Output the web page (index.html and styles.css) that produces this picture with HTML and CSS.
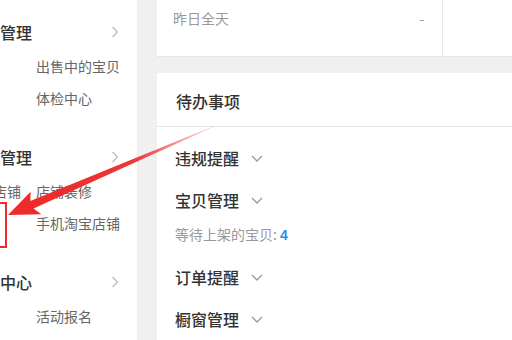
FILE: index.html
```html
<!DOCTYPE html>
<html lang="zh">
<head>
<meta charset="utf-8">
<link rel="stylesheet" href="styles.css">
</head>
<body>
<div class="page">
  <aside class="sidebar">
    <div class="group">
      <div class="group-title"><span>管理</span>
        <svg class="chev" width="8" height="12" viewBox="0 0 8 12"><polyline points="1.5,1 6.5,6 1.5,11" fill="none" stroke="#bbb" stroke-width="1.2"/></svg>
      </div>
      <div class="sub">出售中的宝贝</div>
      <div class="sub">体检中心</div>
    </div>
    <div class="group">
      <div class="group-title"><span>管理</span>
        <svg class="chev" width="8" height="12" viewBox="0 0 8 12"><polyline points="1.5,1 6.5,6 1.5,11" fill="none" stroke="#bbb" stroke-width="1.2"/></svg>
      </div>
      <div class="sub-row"><span class="cut">店铺</span><span class="sub-inline">店铺装修</span></div>
      <div class="sub">手机淘宝店铺</div>
    </div>
    <div class="group">
      <div class="group-title"><span>中心</span>
        <svg class="chev" width="8" height="12" viewBox="0 0 8 12"><polyline points="1.5,1 6.5,6 1.5,11" fill="none" stroke="#bbb" stroke-width="1.2"/></svg>
      </div>
      <div class="sub">活动报名</div>
    </div>
  </aside>
  <main class="main">
    <section class="stats">
      <div class="stat-cell">
        <span class="stat-label">昨日全天</span>
        <span class="stat-value">-</span>
      </div>
      <div class="stat-cell-empty"></div>
    </section>
    <section class="todo">
      <header class="todo-head">待办事项</header>
      <div class="todo-list">
        <div class="todo-item">违规提醒<svg class="down" width="12" height="7" viewBox="0 0 12 7"><polyline points="1,1 6,6 11,1" fill="none" stroke="#999" stroke-width="1.3"/></svg></div>
        <div class="todo-item">宝贝管理<svg class="down" width="12" height="7" viewBox="0 0 12 7"><polyline points="1,1 6,6 11,1" fill="none" stroke="#999" stroke-width="1.3"/></svg></div>
        <div class="todo-sub">等待上架的宝贝: <span class="num">4</span></div>
        <div class="todo-item">订单提醒<svg class="down" width="12" height="7" viewBox="0 0 12 7"><polyline points="1,1 6,6 11,1" fill="none" stroke="#999" stroke-width="1.3"/></svg></div>
        <div class="todo-item">橱窗管理<svg class="down" width="12" height="7" viewBox="0 0 12 7"><polyline points="1,1 6,6 11,1" fill="none" stroke="#999" stroke-width="1.3"/></svg></div>
      </div>
    </section>
  </main>
  <div class="mark-box"></div>
  <svg class="mark-arrow" width="512" height="340" viewBox="0 0 512 340">
    <defs>
      <linearGradient id="fade" x1="0" y1="0" x2="225" y2="0" gradientUnits="userSpaceOnUse">
        <stop offset="0" stop-color="#ee2a2a" stop-opacity="1"/>
        <stop offset="0.6" stop-color="#ee2a2a" stop-opacity="0.95"/>
        <stop offset="1" stop-color="#ee2a2a" stop-opacity="0.15"/>
      </linearGradient>
    </defs>
    <g transform="translate(8,215) rotate(-23.3)">
      <polygon points="0,0 30,-12.5 26,-4 225,-0.4 225,0.4 26,4.2 31,12.5" fill="url(#fade)"/>
    </g>
  </svg>
</div>
</body>
</html>
```
FILE: styles.css
```css
html, body {
  margin: 0;
  padding: 0;
}
body {
  width: 512px;
  height: 340px;
  overflow: hidden;
  background: #f0f0f0;
  font-family: "Noto Sans CJK SC", "Noto Sans", sans-serif;
}
.page {
  position: relative;
  display: flex;
  gap: 20px;
  width: 512px;
  height: 340px;
  overflow: hidden;
}
.sidebar {
  width: 137px;
  flex: none;
  background: #fff;
  padding-top: 16px;
  box-sizing: border-box;
  display: flex;
  flex-direction: column;
  gap: 27px;
}
.group-title {
  display: flex;
  align-items: center;
  justify-content: space-between;
  height: 32px;
  margin-bottom: 2px;
  padding-right: 18px;
  font-size: 16px;
  font-weight: 500;
  color: #333;
}
.chev {
  display: block;
}
.sub {
  height: 32px;
  line-height: 32px;
  padding-left: 36px;
  font-size: 14px;
  color: #666;
}
.sub-row {
  height: 32px;
  line-height: 32px;
  display: flex;
  font-size: 14px;
  color: #666;
}
.cut {
  margin-left: -7px;
  width: 43px;
}
.main {
  flex: 1;
  display: flex;
  flex-direction: column;
  gap: 16px;
}
.stats {
  height: 57px;
  flex: none;
  background: #fff;
  display: flex;
  box-sizing: border-box;
  border-bottom: 1px solid #e6e6e6;
}
.stat-cell {
  width: 286px;
  display: flex;
  justify-content: space-between;
  padding: 7px 18px 0 16px;
  box-sizing: border-box;
  border-right: 1px solid #e8e8e8;
  font-size: 14px;
  color: #999;
  line-height: 22px;
}
.stat-cell-empty {
  flex: 1;
}
.todo {
  flex: 1;
  background: #fff;
}
.todo-head {
  height: 54px;
  box-sizing: border-box;
  border-bottom: 1px solid #e6e6e6;
  padding-left: 19px;
  line-height: 56px;
  font-size: 16px;
  font-weight: 500;
  color: #333;
}
.todo-list {
  padding: 10px 0 0 18px;
}
.todo-item {
  height: 42px;
  display: flex;
  align-items: center;
  gap: 12px;
  font-size: 16px;
  font-weight: 500;
  color: #333;
}
.todo-item .down {
  display: block;
}
.todo-sub {
  line-height: 26px;
  margin-bottom: 8px;
  font-size: 14px;
  color: #999;
}
.num {
  color: #2b8de6;
  font-weight: 700;
  font-family: "Liberation Sans", sans-serif;
}
.mark-box {
  position: absolute;
  left: -4px;
  top: 202px;
  width: 7px;
  height: 42px;
  border: 2px solid #ee2a2a;
}
.mark-arrow {
  position: absolute;
  left: 0;
  top: 0;
  pointer-events: none;
}
```
